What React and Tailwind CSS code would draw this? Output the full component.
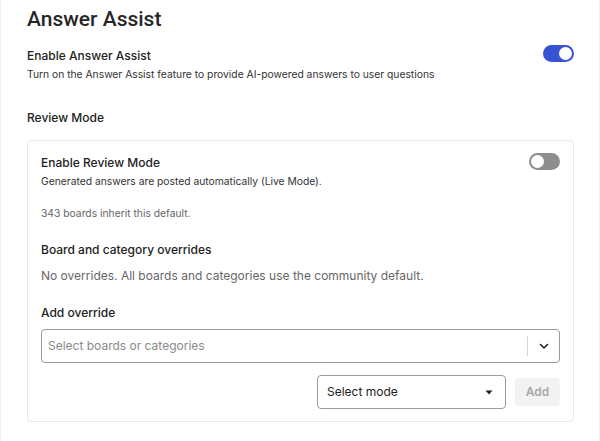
import React, { useState } from 'react';

const Toggle = ({ on, onChange }) => (
  <button
    type="button"
    onClick={() => onChange(!on)}
    className={`relative w-[31px] h-[17px] rounded-full shrink-0 ${on ? 'bg-[#3752d3]' : 'bg-[#8e8e8e]'}`}
  >
    <span
      className={`absolute top-[2px] w-[13px] h-[13px] rounded-full bg-white ${on ? 'left-[16px]' : 'left-[2px]'}`}
    />
  </button>
);

export default function App() {
  const [assist, setAssist] = useState(true);
  const [review, setReview] = useState(false);

  return (
    <div className="w-[600px] h-[441px] bg-white border-l border-r border-[#f1f1f1] overflow-hidden text-[#222] font-['Inter',sans-serif]">
      <div className="pl-[26px] pr-[25px] pt-[5px]">
        <h1 className="font-['Roboto',sans-serif] text-[21px] leading-[28px] font-medium text-[#262626]">Answer Assist</h1>

        {/* Enable Answer Assist */}
        <div className="mt-[14px] flex items-start justify-between">
          <div>
            <div className="text-[12px] leading-[18px] font-medium">Enable Answer Assist</div>
            <div className="mt-[1px] text-[10.3px] leading-[16px] text-[#333]">
              Turn on the Answer Assist feature to provide AI-powered answers to user questions
            </div>
          </div>
          <div className="-mt-[3px]">
            <Toggle on={assist} onChange={setAssist} />
          </div>
        </div>

        <div className="mt-[27px] text-[12px] leading-[18px] font-medium">Review Mode</div>

        {/* Review mode card */}
        <div className="mt-[13px] border border-[#e8e8e8] rounded-[4px] px-[13px] pt-[13px] pb-[12px]">
          <div className="flex items-start justify-between">
            <div>
              <div className="text-[12px] leading-[18px] font-medium">Enable Review Mode</div>
              <div className="mt-[1px] text-[10.3px] leading-[16px] text-[#333]">
                Generated answers are posted automatically (Live Mode).
              </div>
            </div>
            <div className="-mt-[2px]">
              <Toggle on={review} onChange={setReview} />
            </div>
          </div>

          <div className="mt-[16px] text-[10.3px] leading-[16px] text-[#666]">343 boards inherit this default.</div>

          <div className="mt-[20px] text-[12px] leading-[18px] font-medium">Board and category overrides</div>
          <div className="mt-[8px] text-[12px] leading-[18px] text-[#666]">
            No overrides. All boards and categories use the community default.
          </div>

          <div className="mt-[19px] text-[12px] leading-[18px] font-medium">Add override</div>

          <div className="mt-[7px] h-[34px] border border-[#9a9a9a] rounded-[4px] flex items-center">
            <div className="flex-1 pl-[6px] text-[12px] text-[#8a8a8a]">Select boards or categories</div>
            <div className="w-px h-[20px] bg-[#d4d4d4]" />
            <div className="w-[31px] flex justify-center">
              <svg width="12" height="12" viewBox="0 0 12 12" fill="none">
                <path d="M2.5 4.5 6 8l3.5-3.5" stroke="#222" strokeWidth="1.6" strokeLinecap="round" strokeLinejoin="round" />
              </svg>
            </div>
          </div>

          <div className="mt-[12px] flex justify-end items-center gap-[9px]">
            <div className="w-[189px] h-[34px] border border-[#9a9a9a] rounded-[4px] flex items-center justify-between pl-[9px] pr-[12px]">
              <span className="text-[12px] text-[#222]">Select mode</span>
              <svg width="8" height="5" viewBox="0 0 8 5">
                <path d="M0.5 0.5h7L4 4.5z" fill="#222" />
              </svg>
            </div>
            <button
              type="button"
              disabled
              className="w-[45px] h-[28px] rounded-[4px] bg-[#f2f2f2] text-[12px] font-semibold text-[#a8a8a8]"
            >
              Add
            </button>
          </div>
        </div>
      </div>
    </div>
  );
}
